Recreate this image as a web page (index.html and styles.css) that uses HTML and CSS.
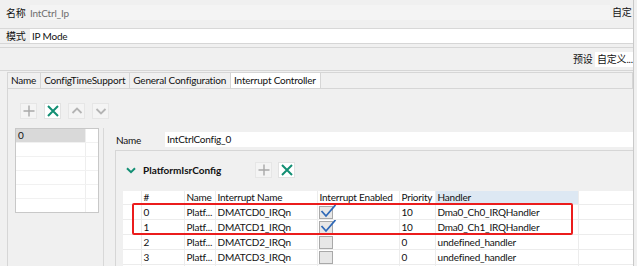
FILE: index.html
```html
<!DOCTYPE html>
<html>
  <head>
    <title>IntCtrl_Ip</title>
    <link rel="stylesheet" href="styles.css">
  </head>
  <body>
    <div class="window">
      <!-- header fields -->
      <div class="top-row">
        <span class="label">名称</span>
        <div class="field readonly">IntCtrl_Ip</div>
        <span class="suffix">自定</span>
      </div>
      <div class="mode-row">
        <span class="label">模式</span>
        <div class="field">IP Mode</div>
      </div>
      <div class="double-line"></div>
      <div class="preset-row">
        <span class="label">预设</span>
        <div class="field preset">自定义...</div>
      </div>

      <!-- tabs -->
      <div class="tabs">
        <div class="tab">Name</div>
        <div class="tab">ConfigTimeSupport</div>
        <div class="tab">General Configuration</div>
        <div class="tab active">Interrupt Controller</div>
        <div class="tab-rest"></div>
      </div>

      <div class="tab-body">
        <div class="toolbar">
          <button class="tool-btn disabled">
            <svg width="12" height="12" viewBox="0 0 12 12"><path d="M6 0.5V11.5M0.5 6H11.5" stroke="#a8a8a8" stroke-width="1.4"/></svg>
          </button>
          <button class="tool-btn on">
            <svg width="12" height="12" viewBox="0 0 12 12"><path d="M1 1L11 11M11 1L1 11" stroke="#138f74" stroke-width="2"/></svg>
          </button>
          <button class="tool-btn disabled">
            <svg width="12" height="12" viewBox="0 0 12 12"><path d="M1.5 8L6 3.5L10.5 8" fill="none" stroke="#b4b4b4" stroke-width="1.8"/></svg>
          </button>
          <button class="tool-btn disabled">
            <svg width="12" height="12" viewBox="0 0 12 12"><path d="M1.5 4L6 8.5L10.5 4" fill="none" stroke="#b4b4b4" stroke-width="1.8"/></svg>
          </button>
        </div>

        <div class="split">
          <div class="list-col">
            <div class="list">
              <div class="list-row selected"><span>0</span></div>
              <div class="list-row"><span></span></div>
              <div class="list-row"><span></span></div>
              <div class="list-row"><span></span></div>
              <div class="list-row"><span></span></div>
              <div class="list-row last"><span></span></div>
            </div>
          </div>

          <div class="detail">
            <div class="name-line">
              <span class="name-label">Name</span>
              <div class="field">IntCtrlConfig_0</div>
            </div>

            <div class="group">
              <div class="group-head">
                <svg class="chevron" width="10" height="7" viewBox="0 0 10 7"><path d="M1 1.2L5 5.2L9 1.2" fill="none" stroke="#138f74" stroke-width="2"/></svg>
                <span class="group-title">PlatformIsrConfig</span>
                <button class="tool-btn disabled">
                  <svg width="12" height="12" viewBox="0 0 12 12"><path d="M6 0.5V11.5M0.5 6H11.5" stroke="#a8a8a8" stroke-width="1.4"/></svg>
                </button>
                <button class="tool-btn on">
                  <svg width="12" height="12" viewBox="0 0 12 12"><path d="M1 1L11 11M11 1L1 11" stroke="#138f74" stroke-width="2"/></svg>
                </button>
              </div>

              <div class="grid-wrap">
                <table class="grid">
                  <colgroup>
                    <col style="width:18px">
                    <col style="width:43px">
                    <col style="width:31px">
                    <col style="width:102px">
                    <col style="width:82px">
                    <col style="width:36px">
                    <col style="width:143px">
                    <col>
                  </colgroup>
                  <thead>
                    <tr>
                      <th></th>
                      <th>#</th>
                      <th>Name</th>
                      <th>Interrupt Name</th>
                      <th>Interrupt Enabled</th>
                      <th>Priority</th>
                      <th class="sorted">Handler</th>
                      <th></th>
                    </tr>
                  </thead>
                  <tbody>
                    <tr>
                      <td></td><td>0</td><td>Platf...</td><td>DMATCD0_IRQn</td>
                      <td><span class="check checked"><svg width="17" height="15" viewBox="0 0 17 15"><path d="M1.5 7L6 12L15.5 1" fill="none" stroke="#2f69b8" stroke-width="1.8"/></svg></span></td>
                      <td>10</td><td>Dma0_Ch0_IRQHandler</td><td></td>
                    </tr>
                    <tr>
                      <td></td><td>1</td><td>Platf...</td><td>DMATCD1_IRQn</td>
                      <td><span class="check checked"><svg width="17" height="15" viewBox="0 0 17 15"><path d="M1.5 7L6 12L15.5 1" fill="none" stroke="#2f69b8" stroke-width="1.8"/></svg></span></td>
                      <td>10</td><td>Dma0_Ch1_IRQHandler</td><td></td>
                    </tr>
                    <tr>
                      <td></td><td>2</td><td>Platf...</td><td>DMATCD2_IRQn</td>
                      <td><span class="check"></span></td>
                      <td>0</td><td>undefined_handler</td><td></td>
                    </tr>
                    <tr>
                      <td></td><td>3</td><td>Platf...</td><td>DMATCD3_IRQn</td>
                      <td><span class="check"></span></td>
                      <td>0</td><td>undefined_handler</td><td></td>
                    </tr>
                    <tr>
                      <td></td><td></td><td></td><td></td>
                      <td><span class="check"></span></td>
                      <td></td><td></td><td></td>
                    </tr>
                  </tbody>
                </table>
                <!-- red highlight drawn over the first two rows -->
                <div class="highlight"></div>
              </div>
            </div>
          </div>
        </div>
      </div>
    </div>
  </body>
</html>
```

FILE: styles.css
```css
/* dialog look */
body {
  margin: 0;
  background-color: #f0f0f0;
  font-family: Lato, "Noto Sans CJK SC", sans-serif;
  font-size: 10px;
  letter-spacing: -0.2px;
  color: #111111;
  overflow: hidden;
}

.window {
  width: 633px;
  height: 266px;
  border-right: 1px solid #c9c9c9;
  overflow: hidden;
}

.label {
  width: 24px;
  flex: none;
  line-height: 15px;
  white-space: nowrap;
}

.field {
  flex: 1;
  background-color: #ffffff;
  height: 15px;
  line-height: 15px;
  padding-left: 2px;
  white-space: nowrap;
  overflow: hidden;
}

/* name row */
.top-row {
  display: flex;
  align-items: flex-start;
  height: 23px;
  padding: 5px 0 0 6px;
  border-bottom: 1px solid #d8d8d8;
}

.top-row .label {
  line-height: 17px;
}

.field.readonly {
  background-color: #f4f4f4;
  color: #6e6e6e;
  padding-left: 0;
  line-height: 17px;
}

.suffix {
  width: 21px;
  padding-left: 2px;
  line-height: 15px;
  white-space: nowrap;
}

/* mode row */
.mode-row {
  display: flex;
  height: 14px;
  padding-left: 6px;
}

.mode-row .field {
  height: 14px;
  line-height: 14px;
  padding-left: 2px;
}

.double-line {
  height: 3px;
  border-top: 1px solid #d6d6d6;
  border-bottom: 1px solid #d6d6d6;
}

/* preset row */
.preset-row {
  display: flex;
  justify-content: flex-end;
  align-items: center;
  height: 22px;
  border-bottom: 1px solid #d6d6d6;
}

.preset-row .label {
  width: 22px;
}

.field.preset {
  flex: none;
  width: 36px;
}

/* tabs */
.tabs {
  display: flex;
  margin-top: 1px;
  padding-left: 7px;
  height: 16px;
}

.tab {
  border: 1px solid #d6d6d6;
  border-right: none;
  border-bottom: none;
  padding: 0 4px 0 3px;
  line-height: 15px;
  white-space: nowrap;
}

.tab.active {
  background-color: #ffffff;
}

.tab-rest {
  flex: 1;
  border: 1px solid #d6d6d6;
  border-bottom: none;
}

.tab-body {
  margin-left: 7px;
  border-left: 1px solid #d6d6d6;
  border-top: 1px solid #d6d6d6;
  height: 200px;
}

/* tool buttons */
.toolbar {
  display: flex;
  gap: 7px;
  padding: 14px 0 0 12px;
  height: 25px;
}

.tool-btn {
  width: 17px;
  height: 16px;
  padding: 0;
  border: 1px solid #e6e6e6;
  background-color: #f4f4f4;
  display: flex;
  align-items: center;
  justify-content: center;
}

.tool-btn.on {
  background-color: #ffffff;
  border-color: #e2e2e2;
}

.split {
  display: flex;
}

/* list of configs */
.list-col {
  width: 88px;
  flex: none;
  padding-left: 7px;
  border-right: 1px solid #d8d8d8;
  height: 140px;
}

.list {
  width: 82px;
  background-color: #ffffff;
  border: 1px solid #c8c8c8;
}

.list-row {
  display: flex;
  height: 13px;
  border-bottom: 1px solid #f1f1f1;
}

.list-row.last {
  border-bottom: none;
}

.list-row span {
  width: 67px;
  border-right: 1px solid #eeeeee;
  line-height: 13px;
  padding-left: 2px;
}

.list-row.selected span {
  background-color: #d9d9d9;
}

/* detail pane */
.detail {
  flex: 1;
  padding-left: 11px;
}

.name-line {
  display: flex;
  align-items: center;
  margin-top: 4px;
  height: 15px;
}

.name-label {
  width: 49px;
  flex: none;
  padding-left: 1px;
}

.group {
  margin-top: 3px;
  border-left: 1px solid #d6d6d6;
  border-top: 1px solid #d6d6d6;
  padding-left: 7px;
}

.group-head {
  display: flex;
  align-items: center;
  height: 38px;
  padding-bottom: 2px;
}

.chevron {
  margin-left: 3px;
}

.group-title {
  font-weight: bold;
  letter-spacing: 0;
  margin-left: 7px;
  width: 112px;
}

.group-head .tool-btn {
  margin-right: 6px;
}

/* table */
.grid-wrap {
  position: relative;
  background-color: #ffffff;
}

.grid {
  width: 100%;
  border-collapse: collapse;
  table-layout: fixed;
}

.grid th {
  font-weight: normal;
  text-align: left;
  height: 13px;
  line-height: 13px;
  padding: 0 0 0 2px;
  white-space: nowrap;
  overflow: hidden;
  border-left: 1px solid #ececec;
}

.grid th.sorted {
  background-color: #dde8f3;
}

.grid td {
  height: 13px;
  line-height: 13px;
  padding: 0 0 0 2px;
  border-left: 1px solid #ececec;
  border-top: 1px solid #ececec;
  white-space: nowrap;
  overflow: hidden;
}

.grid td:first-child,
.grid th:first-child {
  border-left: none;
}

.check {
  position: relative;
  display: block;
  width: 12px;
  height: 11px;
  background-color: #e7e7e7;
  border: 1px solid #a9a9a9;
  margin: 1px 0 0 -1px;
}

.check svg {
  position: absolute;
  left: 0;
  top: -3px;
}

.highlight {
  position: absolute;
  left: 9px;
  top: 12px;
  width: 437px;
  height: 28px;
  border: 2px solid #eb1c1c;
  border-radius: 2px;
}
```
